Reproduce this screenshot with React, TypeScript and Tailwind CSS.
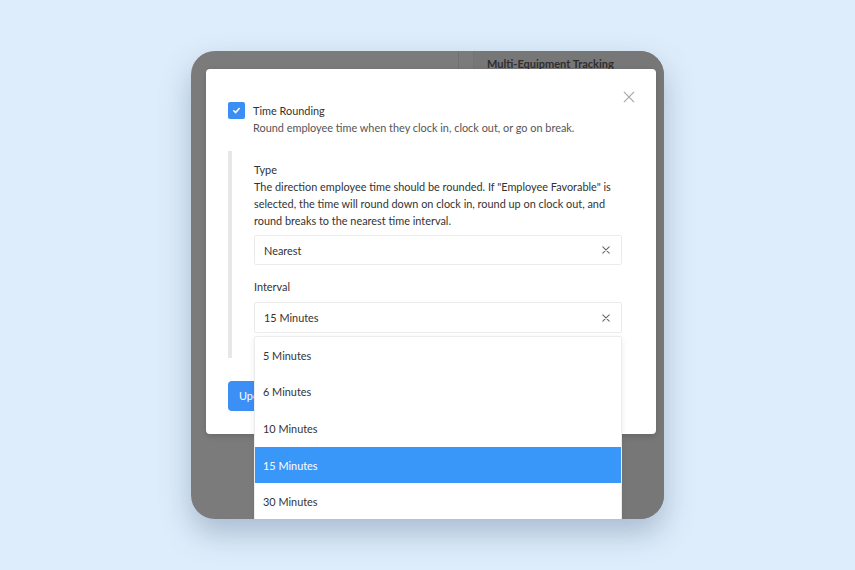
import React from "react";

function XIcon({ size = 8, stroke = "#666", width = 1.3 }: { size?: number; stroke?: string; width?: number }) {
  return (
    <svg width={size} height={size} viewBox="0 0 10 10" fill="none">
      <path d="M1 1 L9 9 M9 1 L1 9" stroke={stroke} strokeWidth={width} strokeLinecap="round" />
    </svg>
  );
}

const options = ["5 Minutes", "6 Minutes", "10 Minutes", "15 Minutes", "30 Minutes"];

export default function App() {
  return (
    <div className="h-[570px] w-full bg-[#deedfb] flex items-center justify-center font-['Lato',sans-serif]">
      <div className="relative w-[473px] h-[468px] rounded-[24px] bg-[#7b7b7b] overflow-hidden shadow-[0_14px_30px_rgba(70,95,130,0.35)]">
        {/* dimmed app behind the modal */}
        <div className="flex h-full">
          <div className="w-[268px] h-full border-r border-[#707070]" />
          <div className="w-[14px] h-full" />
          <div className="flex-1 h-full border-l border-[#747474] bg-[#777777] pl-[13px] pt-[6px]">
            <div className="text-[11px] leading-[14px] font-bold text-[#2f2f2f]">Multi-Equipment Tracking</div>
          </div>
        </div>

        {/* modal */}
        <div className="absolute left-[15px] top-[18px] w-[450px] h-[365px] bg-white rounded-[4px] shadow-[0_2px_6px_rgba(0,0,0,0.15)]">
          <button className="absolute right-[21px] top-[22px] w-[12px] h-[12px] flex items-center justify-center">
            <XIcon size={12} stroke="#a3a3a3" width={0.9} />
          </button>
          <div className="px-[22px] pt-[33px]">
            <div className="flex gap-[8px]">
              <div className="w-[17px] h-[17px] rounded-[2px] bg-[#3b8ef3] flex items-center justify-center shrink-0">
                <svg width="9" height="9" viewBox="0 0 10 10" fill="none">
                  <path d="M2 5.3 L4.1 7.3 L8 2.8" stroke="white" strokeWidth="1.8" strokeLinecap="round" strokeLinejoin="round" />
                </svg>
              </div>
              <div className="text-[10.9px] leading-[17px]">
                <div className="text-[#333333]">Time Rounding</div>
                <div className="text-[#555555] whitespace-nowrap">Round employee time when they clock in, clock out, or go on break.</div>
              </div>
            </div>

            <div className="mt-[15px] border-l-4 border-[#e7e7e7] pl-[22px] pr-[12px] pt-[10px] pb-[25px] text-[10.9px] leading-[17px]">
              <div className="text-[#333333]">Type</div>
              <div className="text-[#333333] whitespace-nowrap">
                The direction employee time should be rounded. If "Employee Favorable" is
                <br />
                selected, the time will round down on clock in, round up on clock out, and
                <br />
                round breaks to the nearest time interval.
              </div>
              <div className="mt-[6px] h-[30px] border border-[#ebebeb] rounded-[2px] flex items-center justify-between pl-[9px] pr-[11px] text-[#333333]">
                <span>Nearest</span>
                <XIcon />
              </div>
              <div className="mt-[13px] text-[#333333]">Interval</div>
              <div className="relative mt-[7px]">
                <div className="h-[31px] border border-[#ebebeb] rounded-[2px] flex items-center justify-between pl-[9px] pr-[11px] text-[#333333]">
                  <span>15 Minutes</span>
                  <XIcon />
                </div>
                <div className="absolute left-0 top-[34px] w-full bg-white border border-[#ececec] rounded-[2px] shadow-[0_2px_6px_rgba(0,0,0,0.08)] z-10">
                  {options.map((o) => (
                    <div
                      key={o}
                      className={
                        o === "15 Minutes"
                          ? "h-[36.6px] flex items-center pl-[8px] bg-[#3997f9] text-white"
                          : "h-[36.6px] flex items-center pl-[8px] text-[#333333]"
                      }
                    >
                      {o}
                    </div>
                  ))}
                </div>
              </div>
            </div>

            <button className="mt-[23px] h-[30px] px-[11px] rounded-[4px] bg-[#3b8ff5] text-white text-[10.9px]">
              Update
            </button>
          </div>
        </div>
      </div>
    </div>
  );
}
